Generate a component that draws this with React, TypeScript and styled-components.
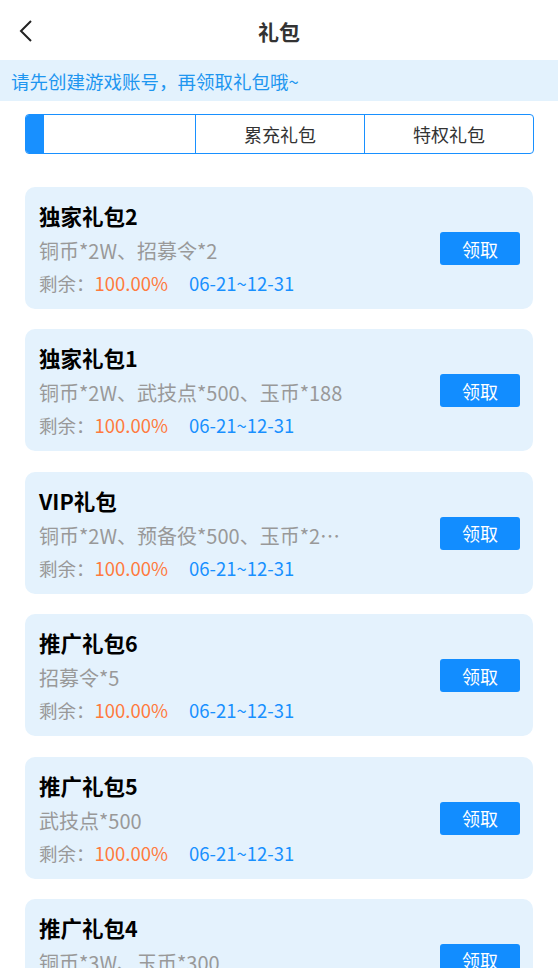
import styled, { createGlobalStyle } from "styled-components";

const GlobalStyle = createGlobalStyle`
  html, body {
    margin: 0;
    padding: 0;
    background: #ffffff;
  }
  body {
    font-family: "Noto Sans CJK SC", "Noto Sans", sans-serif;
  }
  * {
    box-sizing: border-box;
  }
`;

const Page = styled.div`
  width: 558px;
  min-height: 968px;
  background: #ffffff;
  overflow: hidden;
`;

const Header = styled.div`
  height: 60px;
  display: grid;
  grid-template-columns: 60px 1fr 60px;
  align-items: center;
`;

const BackButton = styled.div`
  display: flex;
  align-items: center;
  padding-left: 18px;
  padding-top: 2px;
`;

const Title = styled.h1`
  margin: 0;
  text-align: center;
  font-size: 21px;
  font-weight: 700;
  color: #333333;
  padding-top: 2px;
`;

const Notice = styled.div`
  height: 41px;
  background: #e3f2fd;
  color: #1e96f0;
  font-size: 18.5px;
  display: flex;
  align-items: center;
  padding-left: 11px;
`;

const Tabs = styled.div`
  margin: 13px 24px 0 25px;
  height: 40px;
  display: grid;
  grid-template-columns: repeat(3, 1fr);
  border: 1px solid #1890ff;
  border-radius: 4px;
  overflow: hidden;
`;

const Tab = styled.div<{ $first?: boolean }>`
  position: relative;
  display: flex;
  align-items: center;
  justify-content: center;
  font-size: 18px;
  color: #333333;
  border-left: ${(p) => (p.$first ? "none" : "1px solid #1890ff")};
`;

const ActiveMark = styled.span`
  position: absolute;
  left: 0;
  top: 0;
  bottom: 0;
  width: 18px;
  background: #1890ff;
`;

const List = styled.div`
  padding: 33px 25px 0 25px;
  display: flex;
  flex-direction: column;
  gap: 20.4px;
`;

const Card = styled.div`
  height: 122px;
  background: #e4f2fd;
  border-radius: 10px;
  padding: 14px 13px 12px 14px;
  display: flex;
  align-items: center;
  justify-content: space-between;
`;

const Info = styled.div`
  display: flex;
  flex-direction: column;
  min-width: 0;
`;

const Name = styled.div`
  font-size: 21.5px;
  font-weight: 700;
  line-height: 30px;
  color: #000000;
`;

const Reward = styled.div`
  margin-top: 6px;
  font-size: 20px;
  line-height: 28px;
  color: #999999;
  max-width: 309px;
  white-space: nowrap;
  overflow: hidden;
  text-overflow: ellipsis;
`;

const Meta = styled.div`
  margin-top: 4px;
  font-size: 18.5px;
  line-height: 28px;
  color: #999999;
  white-space: nowrap;
`;

const Percent = styled.span`
  color: #ff7a3d;
  margin-right: 21px;
`;

const Dates = styled.span`
  color: #1890ff;
`;

const ClaimButton = styled.button`
  width: 80px;
  height: 33px;
  margin-bottom: 1px;
  border: none;
  border-radius: 3px;
  background: #128dff;
  color: #ffffff;
  font-family: inherit;
  font-size: 18px;
  padding: 0;
  flex-shrink: 0;
`;

const gifts = [
  { name: "独家礼包2", reward: "铜币*2W、招募令*2" },
  { name: "独家礼包1", reward: "铜币*2W、武技点*500、玉币*188" },
  { name: "VIP礼包", reward: "铜币*2W、预备役*500、玉币*2000" },
  { name: "推广礼包6", reward: "招募令*5" },
  { name: "推广礼包5", reward: "武技点*500" },
  { name: "推广礼包4", reward: "铜币*3W、玉币*300" },
];

function App() {
  return (
    <Page>
      <GlobalStyle />
      <Header>
        <BackButton>
          <svg width="16" height="24" viewBox="0 0 16 24" fill="none">
            <path d="M13 2 L3 12 L13 22" stroke="#222" strokeWidth="2" />
          </svg>
        </BackButton>
        <Title>礼包</Title>
        <div />
      </Header>
      <Notice>请先创建游戏账号，再领取礼包哦~</Notice>
      <Tabs>
        <Tab $first>
          <ActiveMark />
        </Tab>
        <Tab>累充礼包</Tab>
        <Tab>特权礼包</Tab>
      </Tabs>
      <List>
        {gifts.map((gift) => (
          <Card key={gift.name}>
            <Info>
              <Name>{gift.name}</Name>
              <Reward>{gift.reward}</Reward>
              <Meta>
                剩余：<Percent>100.00%</Percent>
                <Dates>06-21~12-31</Dates>
              </Meta>
            </Info>
            <ClaimButton>领取</ClaimButton>
          </Card>
        ))}
      </List>
    </Page>
  );
}

export default App;
